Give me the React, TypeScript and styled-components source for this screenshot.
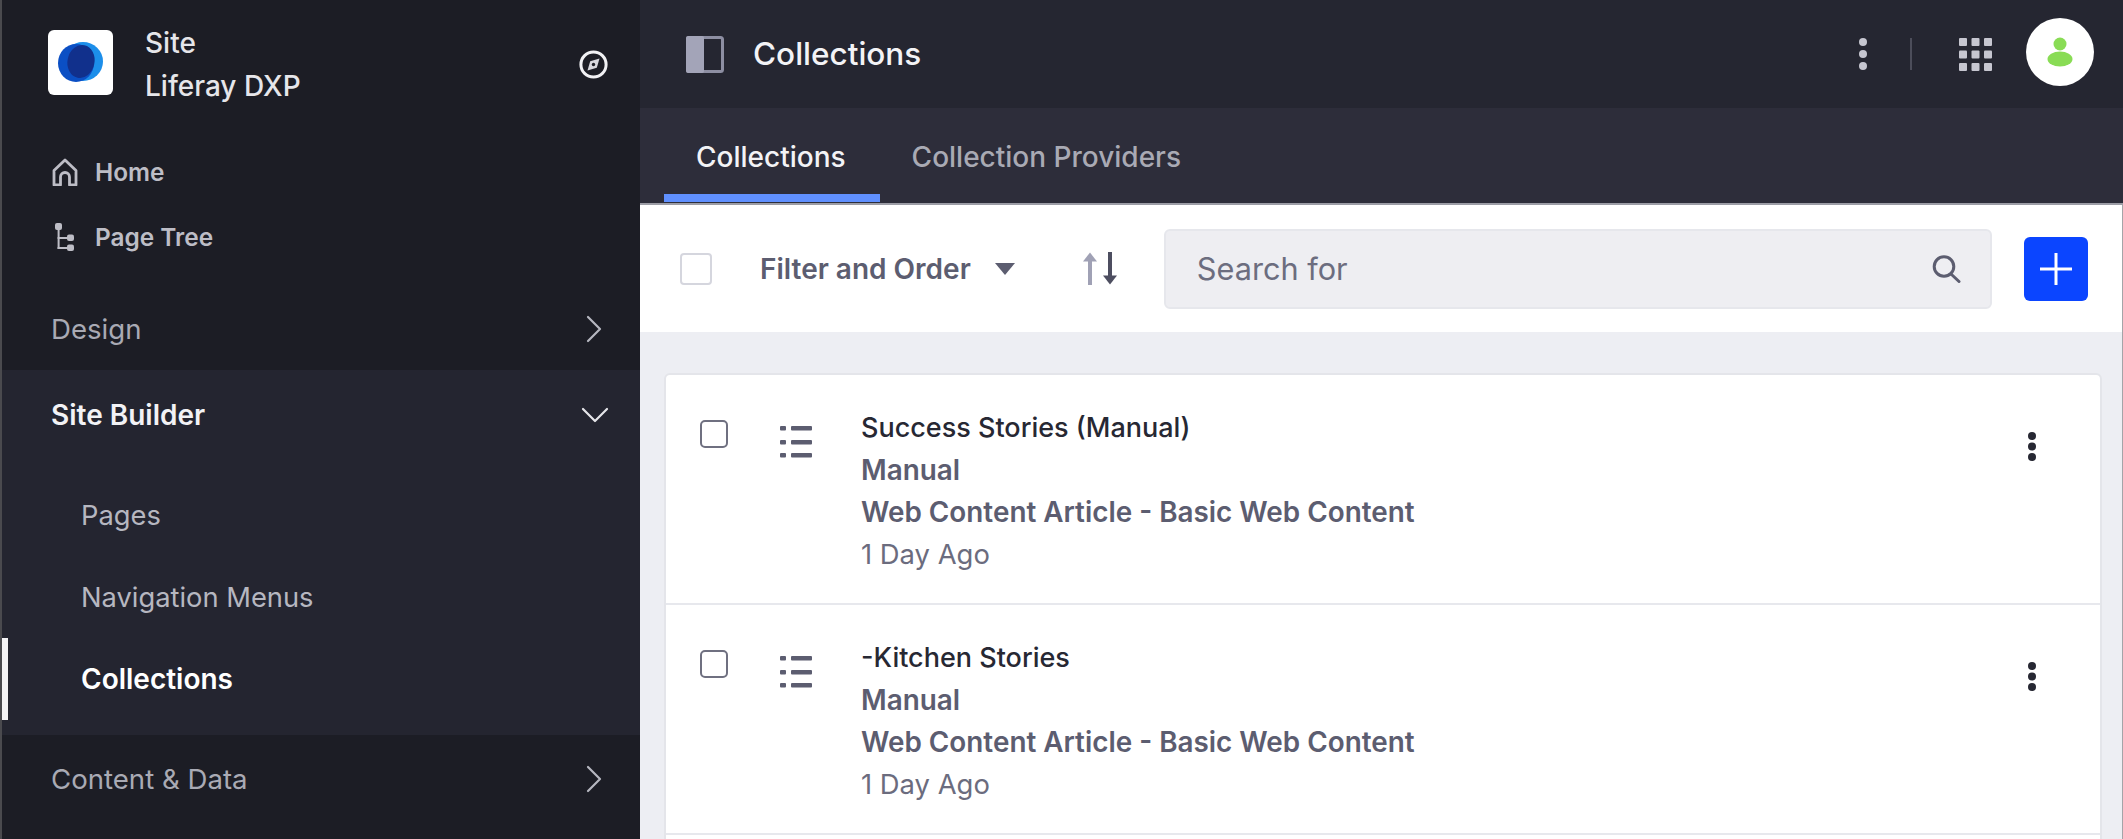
import React from 'react';
import styled, { createGlobalStyle } from 'styled-components';

const Global = createGlobalStyle`
  html, body { margin: 0; padding: 0; height: 100%; overflow: hidden; background: #edeef3; }
  #root { height: 100%; }
  * { box-sizing: border-box; }
  body { font-family: Inter, "Liberation Sans", sans-serif; -webkit-font-smoothing: antialiased; }
`;

const Page = styled.div`
  display: flex;
  width: 2123px;
  height: 839px;
  overflow: hidden;
`;

const Sidebar = styled.aside`
  width: 640px;
  height: 839px;
  flex: none;
  background: #1c1d25;
  border-left: 2px solid #4a4a4e;
  display: flex;
  flex-direction: column;
`;

const SiteHeader = styled.div`
  display: flex;
  align-items: center;
  height: 128px;
  padding: 0 32px 0 46px;
`;

const LogoBox = styled.div`
  width: 65px;
  height: 65px;
  flex: none;
  margin-bottom: 3px;
  border-radius: 6px;
  background: #fff;
  display: flex;
  align-items: center;
  justify-content: center;
`;

const SiteName = styled.div`
  flex: 1;
  margin: 2px 0 0 32px;
  color: #e6e6ea;
  font-size: 28px;
  line-height: 43px;
  font-weight: 500;
`;

const QuickLinks = styled.div`
  display: flex;
  flex-direction: column;
  gap: 22px;
  padding: 22px 0 0 49px;
  height: 159px;
`;

const QuickLink = styled.div`
  display: flex;
  align-items: center;
  gap: 17px;
  height: 43px;
  color: #bdbdc6;
  font-size: 24.4px;
  font-weight: 600;
`;

const QuickIcon = styled.span`
  width: 27px;
  display: flex;
  justify-content: center;
`;

const SectionRow = styled.div`
  display: flex;
  align-items: center;
  justify-content: space-between;
  flex: none;
  height: ${p => p.$h || 90}px;
  padding: 0 33px 0 49px;
  font-size: ${p => (p.$open ? 28 : 27.6)}px;
  color: ${p => (p.$open ? '#f2f2f5' : '#a9aab4')};
  font-weight: ${p => (p.$open ? 600 : 400)};
`;

const OpenSection = styled.div`
  background: #242530;
  height: 365px;
  flex: none;
  display: flex;
  flex-direction: column;
`;

const SubList = styled.div`
  display: flex;
  flex-direction: column;
  padding-top: 14px;
`;

const SubItem = styled.div`
  position: relative;
  height: 82px;
  display: flex;
  align-items: center;
  padding-left: 79px;
  font-size: ${p => (p.$active ? 28 : 27.3)}px;
  color: ${p => (p.$active ? '#fff' : '#b6b7c0')};
  font-weight: ${p => (p.$active ? 600 : 400)};
  &::before {
    content: '';
    display: ${p => (p.$active ? 'block' : 'none')};
    position: absolute;
    left: 0;
    top: 0;
    bottom: 0;
    width: 6px;
    background: #f4f4f6;
  }
`;

const Main = styled.main`
  flex: 1;
  min-width: 0;
  display: flex;
  flex-direction: column;
  background: #edeef3;
`;

const TopBar = styled.header`
  height: 108px;
  flex: none;
  background: #252631;
  display: flex;
  align-items: center;
  padding: 0 29px 0 46px;
`;

const PageTitle = styled.h1`
  margin: 0 0 2px 29px;
  flex: 1;
  font-size: 31.5px;
  font-weight: 500;
  color: #f3f3f6;
`;

const TopDivider = styled.span`
  width: 2px;
  height: 32px;
  background: #4c4d5a;
  margin: 0 47px 0 41px;
`;

const Avatar = styled.div`
  width: 68px;
  height: 68px;
  border-radius: 50%;
  background: #fff;
  margin-left: 34px;
  margin-top: -4px;
  display: flex;
  align-items: center;
  justify-content: center;
`;

const TabBar = styled.nav`
  height: 97px;
  flex: none;
  background: #2d2d3a;
  border-bottom: 2px solid #9c9da6;
  display: flex;
  padding-left: 24px;
`;

const Tab = styled.div`
  display: flex;
  align-items: center;
  height: 94px;
  padding: 12px 34px 0 32px;
  font-size: 28px;
  font-weight: 500;
  color: ${p => (p.$active ? '#f3f3f6' : '#a9aab4')};
  border-bottom: 8px solid ${p => (p.$active ? '#6090ff' : 'transparent')};
`;

const Toolbar = styled.div`
  height: 127px;
  flex: none;
  background: #fff;
  border-right: 1px solid #a4a4a8;
  display: flex;
  align-items: center;
  padding: 0 34px 0 40px;
`;

const ToolCheck = styled.span`
  width: 32px;
  height: 32px;
  flex: none;
  border: 2px solid #d5d6de;
  border-radius: 4px;
  background: #fff;
`;

const FilterLabel = styled.span`
  margin-left: 48px;
  font-size: 28px;
  font-weight: 600;
  color: #5c5d70;
  white-space: nowrap;
`;

const Caret = styled.span`
  margin-left: 24px;
  flex: none;
  width: 0;
  height: 0;
  border-left: 10px solid transparent;
  border-right: 10px solid transparent;
  border-top: 12px solid #5c5d70;
`;

const SortWrap = styled.span`
  margin-left: 68px;
  display: flex;
  flex: none;
`;

const Search = styled.div`
  margin-left: 47px;
  flex: 1;
  height: 80px;
  display: flex;
  align-items: center;
  justify-content: space-between;
  background: #eeeef2;
  border: 2px solid #e6e7ec;
  border-radius: 6px;
  padding: 0 29px 0 31px;
  font-size: 30.7px;
  color: #6c6d7f;
`;

const AddButton = styled.button`
  width: 64px;
  height: 64px;
  margin-left: 32px;
  flex: none;
  border: 0;
  padding: 0;
  border-radius: 6px;
  background: #0b45ff;
  display: flex;
  align-items: center;
  justify-content: center;
`;

const Content = styled.div`
  flex: 1;
  min-height: 0;
  overflow: hidden;
  border-right: 1px solid #a4a4a8;
  padding: 41px 20px 0 24px;
`;

const Card = styled.div`
  background: #fff;
  border: 2px solid #e4e5ea;
  border-radius: 6px 6px 0 0;
  min-height: 600px;
`;

const Row = styled.div`
  height: 230px;
  display: flex;
  align-items: flex-start;
  padding: 32px 62px 0 34px;
  border-bottom: 2px solid #e7e8ed;
`;

const RowCheck = styled.span`
  width: 28px;
  height: 28px;
  flex: none;
  margin-top: 13px;
  border: 2px solid #6f7080;
  border-radius: 5px;
`;

const RowIcon = styled.span`
  margin: 19px 0 0 52px;
  display: flex;
`;

const RowText = styled.div`
  flex: 1;
  margin-left: 49px;
  font-size: 27.85px;
  line-height: 42px;
`;

const RowTitle = styled.div`
  color: #272833;
  font-weight: 500;
  font-size: 27px;
`;

const RowLine = styled.div`
  color: #5c5d70;
  font-weight: 600;
`;

const RowDate = styled.div`
  color: #6b6c7e;
  font-weight: 400;
  font-size: 27.4px;
`;

const KebabWrap = styled.span`
  margin-top: 23px;
  display: flex;
`;

const Kebab = ({ color, step = 12 }: { color: string; step?: number }) => (
  <svg width="12" height={12 + step * 2} viewBox={`0 0 12 ${12 + step * 2}`}>
    {[0, 1, 2].map(i => <circle key={i} cx="6" cy={6 + i * step} r="4" fill={color} />)}
  </svg>
);

const Chevron = ({ down }: { down?: boolean }) => (
  <svg width="24" height="24" viewBox="0 0 24 24" fill="none" overflow="visible" stroke={down ? '#e6e6ea' : '#b6b7c0'} strokeWidth="2.2" strokeLinecap="round" strokeLinejoin="round">
    {down ? <path d="M0 6l12 12L24 6" /> : <path d="M5 0l12 12L5 24" />}
  </svg>
);

const Logo = () => (
  <svg width="65" height="65" viewBox="0 0 65 65">
    <ellipse cx="35" cy="31.5" rx="20" ry="19.5" fill="#1c8eea" />
    <ellipse cx="28" cy="33" rx="18" ry="19" fill="#0b4fc4" />
    <ellipse cx="33" cy="31.5" rx="13.5" ry="16.5" fill="#11308c" transform="rotate(12 33 31.5)" />
  </svg>
);

const Compass = () => (
  <svg width="29" height="29" viewBox="0 0 29 29" fill="none">
    <circle cx="14.5" cy="14.5" r="12.6" stroke="#f1f1f4" strokeWidth="3" />
    <path d="M20.5 8.5l-2.7 9.3-9.3 2.7 2.7-9.3z" fill="#d8d8de" />
    <circle cx="14.5" cy="14.5" r="1.7" fill="#1c1d25" />
  </svg>
);

const HomeIcon = () => (
  <svg width="26" height="28" viewBox="0 0 26 28" fill="none" stroke="#bdbdc6" strokeWidth="2.8" strokeLinejoin="round">
    <path d="M2 27V12.5L13 2l11 10.5V27h-6.5v-8a4.5 4.5 0 0 0-9 0v8z" />
  </svg>
);

const TreeIcon = () => (
  <svg width="20" height="28" viewBox="0 0 20 28" fill="#bdbdc6" stroke="none">
    <rect x="0" y="0" width="7" height="7" rx="2" />
    <rect x="2.6" y="6" width="2" height="20" />
    <rect x="2.6" y="14" width="10" height="2" />
    <rect x="2.6" y="24" width="10" height="2" />
    <rect x="12" y="11.5" width="7" height="6.5" rx="2" />
    <rect x="12" y="21.5" width="7" height="6.5" rx="2" />
  </svg>
);

const PanelIcon = () => (
  <svg width="38" height="37" viewBox="0 0 38 37">
    <rect x="1.5" y="1.5" width="35" height="34" rx="2" fill="none" stroke="#8d8ea2" strokeWidth="3" />
    <rect x="0" y="0" width="18" height="37" rx="2" fill="#a3a4b8" />
  </svg>
);

const GridIcon = () => (
  <svg width="33" height="33" viewBox="0 0 33 33" fill="#c6c6d0">
    {[0, 12.5, 25].flatMap(y => [0, 12.5, 25].map(x => <rect key={`${x}-${y}`} x={x} y={y} width="8" height="8" rx="1" />))}
  </svg>
);

const PersonIcon = () => (
  <svg width="26" height="30" viewBox="0 0 26 30" fill="#89dc55">
    <circle cx="13" cy="7" r="6.5" />
    <ellipse cx="13" cy="22" rx="12.5" ry="7.5" />
  </svg>
);

const SortIcon = () => (
  <svg width="34" height="33" viewBox="0 0 34 33" fill="none" strokeWidth="4">
    <path d="M7 33V3" stroke="#a0a1b5" />
    <path d="M0 9.5L7 0.5l7 9z" fill="#a0a1b5" stroke="none" />
    <path d="M27 0v29" stroke="#4d4e60" />
    <path d="M20 23.5l7 9 7-9z" fill="#4d4e60" stroke="none" />
  </svg>
);

const SearchIcon = () => (
  <svg width="29" height="28" viewBox="0 0 29 28" fill="none" stroke="#5c5d70" strokeWidth="3" strokeLinecap="round">
    <circle cx="12" cy="11.5" r="9.8" />
    <path d="M19 19l8 7.5" />
  </svg>
);

const PlusIcon = () => (
  <svg width="32" height="32" viewBox="0 0 32 32" stroke="#fff" strokeWidth="3">
    <path d="M16 0v32M0 16h32" />
  </svg>
);

const ListIcon = () => (
  <svg width="32" height="33" viewBox="0 0 32 33" fill="#5c5d70">
    {[0, 14, 27].map(y => (
      <g key={y}>
        <rect x="0" y={y} width="6" height="4.5" rx="1" />
        <rect x="11" y={y} width="21" height="4.5" rx="1" />
      </g>
    ))}
  </svg>
);

const rows = ['Success Stories (Manual)', '-Kitchen Stories'];

export default function App() {
  return (
    <Page>
      <Global />
      <Sidebar>
        <SiteHeader>
          <LogoBox><Logo /></LogoBox>
          <SiteName>Site<br />Liferay DXP</SiteName>
          <Compass />
        </SiteHeader>
        <QuickLinks>
          <QuickLink><QuickIcon><HomeIcon /></QuickIcon>Home</QuickLink>
          <QuickLink><QuickIcon><TreeIcon /></QuickIcon>Page Tree</QuickLink>
        </QuickLinks>
        <SectionRow $h={83}>Design<Chevron /></SectionRow>
        <OpenSection>
          <SectionRow $open>Site Builder<Chevron down /></SectionRow>
          <SubList>
            <SubItem>Pages</SubItem>
            <SubItem>Navigation Menus</SubItem>
            <SubItem $active>Collections</SubItem>
          </SubList>
        </OpenSection>
        <SectionRow $h={88}>Content &amp; Data<Chevron /></SectionRow>
      </Sidebar>
      <Main>
        <TopBar>
          <PanelIcon />
          <PageTitle>Collections</PageTitle>
          <Kebab color="#c6c6d0" />
          <TopDivider />
          <GridIcon />
          <Avatar><PersonIcon /></Avatar>
        </TopBar>
        <TabBar>
          <Tab $active>Collections</Tab>
          <Tab>Collection Providers</Tab>
        </TabBar>
        <Toolbar>
          <ToolCheck />
          <FilterLabel>Filter and Order</FilterLabel>
          <Caret />
          <SortWrap><SortIcon /></SortWrap>
          <Search>Search for<SearchIcon /></Search>
          <AddButton aria-label="Add"><PlusIcon /></AddButton>
        </Toolbar>
        <Content>
          <Card>
            {rows.map(title => (
              <Row key={title}>
                <RowCheck />
                <RowIcon><ListIcon /></RowIcon>
                <RowText>
                  <RowTitle>{title}</RowTitle>
                  <RowLine>Manual</RowLine>
                  <RowLine>Web Content Article - Basic Web Content</RowLine>
                  <RowDate>1 Day Ago</RowDate>
                </RowText>
                <KebabWrap><Kebab color="#272833" step={10.5} /></KebabWrap>
              </Row>
            ))}
          </Card>
        </Content>
      </Main>
    </Page>
  );
}
